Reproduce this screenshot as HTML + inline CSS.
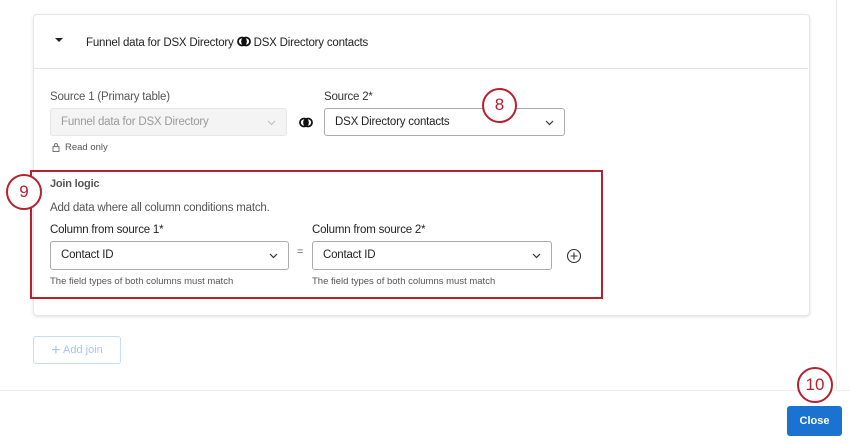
<!DOCTYPE html>
<html><head><style>
body{margin:0;width:850px;height:444px;background:#fff;font-family:"Liberation Sans",sans-serif;position:relative;overflow:hidden;color:#32363a}
.a{position:absolute}
.card{left:33px;top:14px;width:775px;height:300px;border:1px solid #e6e6e6;border-radius:4px;box-shadow:0 1px 3px rgba(0,0,0,.12)}
.sel{position:absolute;height:28px;border:1px solid #a9abae;border-radius:3px;box-sizing:border-box;font-size:11.5px;line-height:27px;padding-left:10px;letter-spacing:-.2px}
.sel svg{position:absolute;right:10px;top:11px}
.lbl{font-size:11.5px;letter-spacing:-.2px}
.circ{position:absolute;border:2.5px solid #b7202e;border-radius:50%;color:#b7202e;font-size:17px;text-align:center;box-sizing:border-box;background:#fff}
.rings{display:inline-block;vertical-align:-1px}
</style></head><body>
<div class="a card"></div>
<div class="a" style="left:34px;top:68px;width:774px;height:1px;background:#e3e3e3"></div>
<div class="a" style="left:836px;top:0;width:1px;height:390px;background:#e8e8e8"></div>
<div class="a" style="left:55px;top:38px;width:0;height:0;border-left:4px solid transparent;border-right:4px solid transparent;border-top:4px solid #222"></div>
<div class="a lbl" style="left:86px;top:36px;color:#222">Funnel data for DSX Directory <svg class="rings" width="14" height="11" viewBox="0 0 14 11"><circle cx="5" cy="5.5" r="4" fill="none" stroke="#111" stroke-width="1.8"/><circle cx="9" cy="5.5" r="4" fill="none" stroke="#111" stroke-width="1.8"/><path d="M7 2a4 4 0 0 1 0 7a4 4 0 0 1 0-7z" fill="#111"/></svg> DSX Directory contacts</div>
<div class="a lbl" style="left:50px;top:91px;color:#555">Source 1 (Primary table)</div>
<div class="a lbl" style="left:324px;top:91px;color:#333">Source 2*</div>
<div class="sel" style="left:50px;top:108px;width:237px;background:#f4f4f4;border-color:#e6e6e6;color:#9a9a9a">Funnel data for DSX Directory<svg width="9" height="6"><path d="M1 1l3.5 3.5L8 1" fill="none" stroke="#bbb" stroke-width="1"/></svg></div>
<svg class="a" style="left:299px;top:117px" width="14" height="11" viewBox="0 0 14 11"><circle cx="5" cy="5.5" r="4" fill="none" stroke="#111" stroke-width="1.8"/><circle cx="9" cy="5.5" r="4" fill="none" stroke="#111" stroke-width="1.8"/><path d="M7 2a4 4 0 0 1 0 7a4 4 0 0 1 0-7z" fill="#111"/></svg>
<div class="sel" style="left:324px;top:108px;width:241px;color:#222">DSX Directory contacts<svg width="9" height="6"><path d="M1 1l3.5 3.5L8 1" fill="none" stroke="#333" stroke-width="1.2"/></svg></div>
<svg class="a" style="left:52px;top:142px" width="8" height="10"><rect x="1" y="4.5" width="6" height="5" fill="none" stroke="#777"/><path d="M2.5 4.5V3a1.5 1.5 0 0 1 3 0v1.5" fill="none" stroke="#777"/></svg>
<div class="a" style="left:65px;top:142px;font-size:9.5px;color:#555">Read only</div>
<div class="circ" style="left:482px;top:88px;width:35px;height:35px;line-height:30px">8</div>
<div class="a" style="left:30px;top:170px;width:573px;height:129px;border:2.5px solid #b7202e;box-sizing:border-box"></div>
<div class="circ" style="left:6px;top:174px;width:36px;height:36px;line-height:31px">9</div>
<div class="a lbl" style="left:50px;top:178px;font-weight:bold;color:#555;font-size:11px">Join logic</div>
<div class="a lbl" style="left:50px;top:202px;color:#555">Add data where all column conditions match.</div>
<div class="a lbl" style="left:50px;top:224px;color:#222">Column from source 1*</div>
<div class="a lbl" style="left:312px;top:224px;color:#222">Column from source 2*</div>
<div class="sel" style="left:50px;top:241px;width:239px;height:29px;color:#222">Contact ID<svg width="9" height="6"><path d="M1 1l3.5 3.5L8 1" fill="none" stroke="#333" stroke-width="1.2"/></svg></div>
<div class="a" style="left:297px;top:246px;font-size:11px;color:#666">=</div>
<div class="sel" style="left:312px;top:241px;width:240px;height:29px;color:#222">Contact ID<svg width="9" height="6"><path d="M1 1l3.5 3.5L8 1" fill="none" stroke="#333" stroke-width="1.2"/></svg></div>
<svg class="a" style="left:566px;top:248px" width="16" height="16"><circle cx="8" cy="8" r="6.5" fill="none" stroke="#333" stroke-width="1.1"/><path d="M8 4.5v7M4.5 8h7" stroke="#333" stroke-width="1.1"/></svg>
<div class="a" style="left:50px;top:276px;font-size:9.5px;color:#555">The field types of both columns must match</div>
<div class="a" style="left:312px;top:276px;font-size:9.5px;color:#555">The field types of both columns must match</div>
<div class="a" style="left:33px;top:336px;width:88px;height:28px;border:1px solid #c8dcf5;border-radius:3px;box-sizing:border-box;color:#a8c6ee;font-size:11px;line-height:26px;text-align:center"><span style="font-size:16px;vertical-align:-2px">+</span> Add join</div>
<div class="a" style="left:0;top:390px;width:850px;height:1px;background:#eee"></div>
<div class="circ" style="left:797px;top:367px;width:36px;height:36px;line-height:31px">10</div>
<div class="a" style="left:787px;top:406px;width:55px;height:30px;background:#1a73d1;border-radius:3px;color:#fff;font-size:11px;font-weight:bold;line-height:30px;text-align:center">Close</div>
</body></html>
